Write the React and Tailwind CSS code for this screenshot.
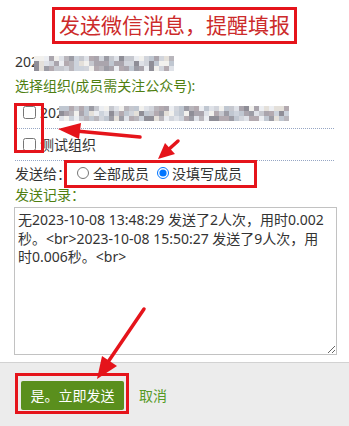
import React from 'react';

const palette = [
  '#eceef2', '#dfe2e8', '#d2d5dc', '#c6c8cf', '#b9b6bc', '#aaa5ad',
  '#9c9ca5', '#e4e0da', '#cdd3dc', '#8f8e97', '#c0c7d1', '#f2f1ee', '#b3aab0',
];

// pixelated (blurred) text block
const Mosaic = ({ cols, seed }) => {
  let s = seed;
  const next = () => {
    s = (s * 9301 + 49297) % 233280;
    return s / 233280;
  };
  const rows = [0, 1, 2].map(() =>
    Array.from({ length: cols }, () => palette[Math.floor(next() * palette.length)])
  );
  return (
    <span className="inline-flex flex-col align-middle">
      {rows.map((row, i) => (
        <span key={i} className="flex">
          {row.map((c, j) => (
            <span key={j} className="block w-[5px] h-[5px]" style={{ backgroundColor: c }} />
          ))}
        </span>
      ))}
    </span>
  );
};

const Arrows = () => (
  <svg className="absolute inset-0 w-full h-full pointer-events-none" viewBox="0 0 349 426">
    <g fill="#e5141b" stroke="#e5141b" strokeLinecap="round">
      <line x1="140" y1="137" x2="76" y2="131" strokeWidth="3.5" />
      <polygon points="58,129 81,123 79,139" stroke="none" />
      <line x1="178" y1="141" x2="168" y2="150" strokeWidth="3.5" />
      <polygon points="158,159 175,154 165,143" stroke="none" />
      <line x1="144" y1="309" x2="108" y2="362" strokeWidth="3.5" />
      <polygon points="97,379 117,366 102,356" stroke="none" />
    </g>
  </svg>
);

const App = () => {
  const log =
    '无2023-10-08 13:48:29 发送了2人次，用时0.002\n秒。<br>2023-10-08 15:50:27 发送了9人次，用\n时0.006秒。<br>';

  return (
    <div className="relative w-[349px] h-[426px] overflow-hidden bg-white pt-[7px] text-[14px] text-[#333] font-['Noto_Sans','Noto_Sans_CJK_SC',sans-serif]">
      {/* Title */}
      <div className="flex justify-center">
        <div className="h-[37px] border-[3px] border-[#e5141b] px-[4px] text-[21px] leading-[31px] text-[#cc2b2b]">
          发送微信消息，提醒填报
        </div>
      </div>

      <div className="px-[15px]">
        <div className="mt-[6px] h-[24px] leading-[24px] whitespace-nowrap">
          202
          <span className="-ml-[5px]">
            <Mosaic cols={28} seed={17} />
          </span>
        </div>
        <div className="h-[23px] leading-[23px] text-[#4f7f12]">选择组织(成员需关注公众号):</div>

        {/* Org checkboxes */}
        <div className="flex items-center gap-[4px] h-[32px] pl-[8px] border-b border-dotted border-[#96a6c4] whitespace-nowrap">
          <input type="checkbox" className="m-0 w-[13px] h-[13px]" />
          <span className="leading-[20px]">
            202
            <span className="-ml-[5px]">
              <Mosaic cols={46} seed={91} />
            </span>
          </span>
        </div>
        <div className="flex items-center gap-[4px] h-[32px] pl-[8px] border-b border-dotted border-[#96a6c4]">
          <input type="checkbox" className="m-0 w-[13px] h-[13px]" />
          <span>测试组织</span>
        </div>

        {/* Send target */}
        <div className="flex items-center h-[24px]">
          <span className="w-[62px]">发送给：</span>
          <label className="flex items-center gap-[4px]">
            <input type="radio" name="target" className="m-0 w-[12px] h-[12px]" />
            <span>全部成员</span>
          </label>
          <label className="flex items-center gap-[3px] ml-[8px]">
            <input type="radio" name="target" defaultChecked className="m-0 w-[12px] h-[12px]" />
            <span>没填写成员</span>
          </label>
        </div>

        <div className="h-[20px] leading-[20px] text-[#4f7f12]">发送记录：</div>
        <textarea
          readOnly
          value={log}
          className="block mt-[2px] -ml-[1px] w-[323px] h-[148px] border border-[#c2c2c2] px-[3px] pt-[3px] leading-[18.7px] text-[14px] text-[#333] outline-none"
        />
      </div>

      {/* Footer */}
      <div className="mt-[7px] h-[64px] bg-[#ececec] border-t border-[#d2d2d2] pt-[18px] pl-[21px] flex items-start gap-[15px]">
        <button className="w-[103px] h-[29px] rounded-[2px] bg-[#5a8f1d] text-white text-[14px] leading-[29px]">
          是。立即发送
        </button>
        <span className="leading-[29px] text-[#559a25]">取消</span>
      </div>

      {/* Annotations */}
      <div className="absolute left-[14px] top-[103px] w-[30px] h-[50px] border-[3px] border-[#e5141b]" />
      <div className="absolute left-[64px] top-[160px] w-[193px] h-[28px] border-[3px] border-[#e5141b]" />
      <div className="absolute left-[15px] top-[373px] w-[114px] h-[41px] border-[3px] border-[#e5141b]" />
      <Arrows />
    </div>
  );
};

export default App;
